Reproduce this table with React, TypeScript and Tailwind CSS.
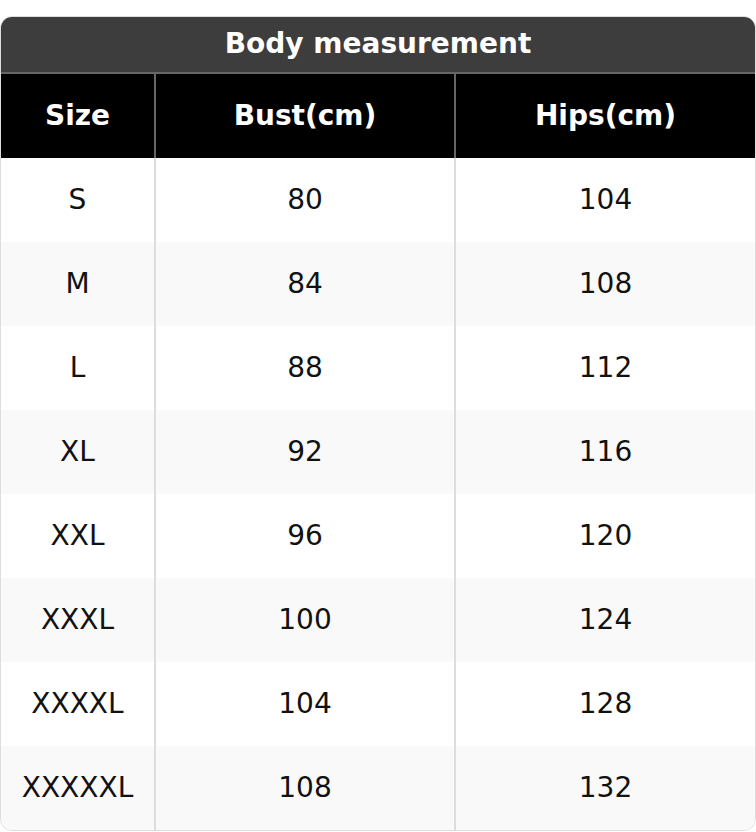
const rows = [
  ["S", "80", "104"],
  ["M", "84", "108"],
  ["L", "88", "112"],
  ["XL", "92", "116"],
  ["XXL", "96", "120"],
  ["XXXL", "100", "124"],
  ["XXXXL", "104", "128"],
  ["XXXXXL", "108", "132"],
];

export default function App() {
  return (
    <div className="bg-white pt-4" style={{ fontFamily: '"DejaVu Sans", sans-serif' }}>
      <div className="overflow-hidden rounded-xl border border-[#dddddd] text-[28px]">
        <div className="flex h-[55px] items-center justify-center bg-[#3d3d3d] pb-px font-bold text-white">
          Body measurement
        </div>
        <div className="flex h-[86px] border-t-2 border-[#666666] bg-black font-bold text-white">
          <div className="flex w-[155px] items-center justify-center border-r-2 border-[#666666]">Size</div>
          <div className="flex w-[300px] items-center justify-center border-r-2 border-[#666666]">Bust(cm)</div>
          <div className="flex flex-1 items-center justify-center">Hips(cm)</div>
        </div>
        {rows.map((r, i) => (
          <div
            key={r[0]}
            className={`flex h-[84px] text-[#111111] ${i % 2 === 1 ? "bg-[#f9f9f9]" : "bg-white"}`}
          >
            <div className="flex w-[155px] items-center justify-center border-r-2 border-[#dddddd]">{r[0]}</div>
            <div className="flex w-[300px] items-center justify-center border-r-2 border-[#dddddd]">{r[1]}</div>
            <div className="flex flex-1 items-center justify-center">{r[2]}</div>
          </div>
        ))}
      </div>
    </div>
  );
}
